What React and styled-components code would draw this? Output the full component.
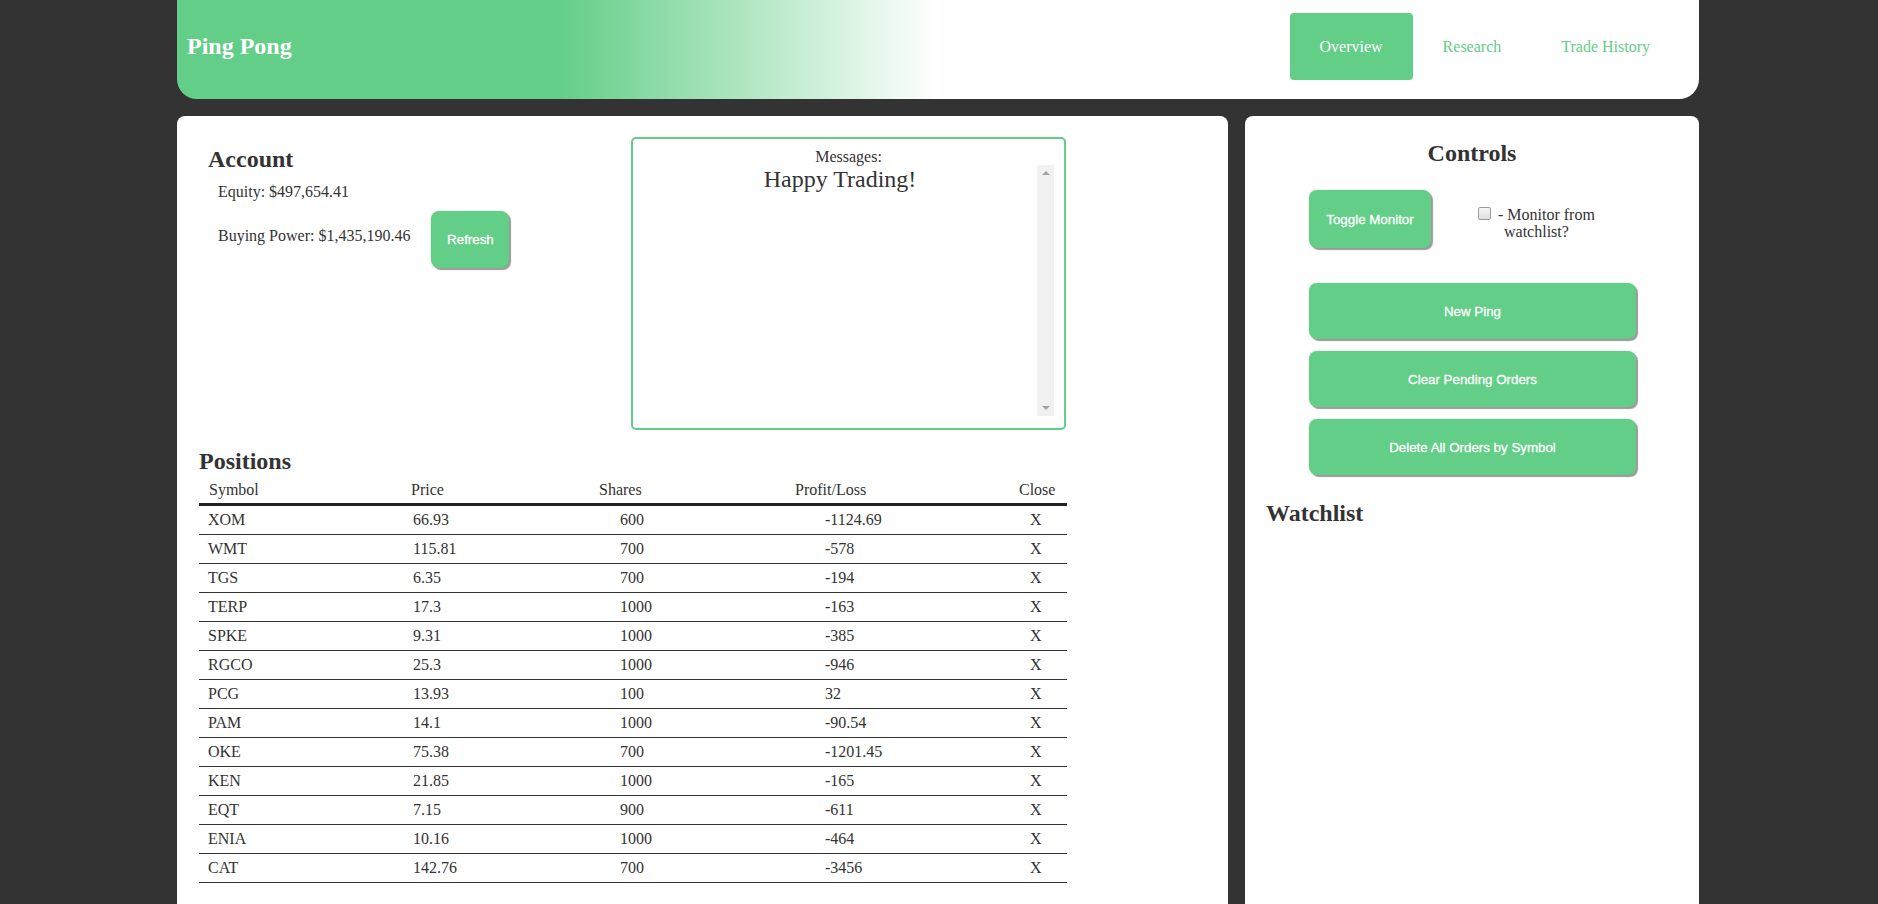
import React, { useState } from "react";
import styled, { createGlobalStyle } from "styled-components";

const green = "#63ce87";

const GlobalStyle = createGlobalStyle`
  body {
    margin: 0;
    background: #333333;
    font-family: "Liberation Serif", "Times New Roman", serif;
    color: #333;
  }
`;

const positions = [
  ["XOM", "66.93", "600", "-1124.69"],
  ["WMT", "115.81", "700", "-578"],
  ["TGS", "6.35", "700", "-194"],
  ["TERP", "17.3", "1000", "-163"],
  ["SPKE", "9.31", "1000", "-385"],
  ["RGCO", "25.3", "1000", "-946"],
  ["PCG", "13.93", "100", "32"],
  ["PAM", "14.1", "1000", "-90.54"],
  ["OKE", "75.38", "700", "-1201.45"],
  ["KEN", "21.85", "1000", "-165"],
  ["EQT", "7.15", "900", "-611"],
  ["ENIA", "10.16", "1000", "-464"],
  ["CAT", "142.76", "700", "-3456"],
];

// column widths and text offsets, header vs body
const columns = [
  { label: "Symbol", width: 212, th: 10, td: 9 },
  { label: "Price", width: 188, th: 0, td: 2 },
  { label: "Shares", width: 196, th: 0, td: 21 },
  { label: "Profit/Loss", width: 224, th: 0, td: 30 },
  { label: "Close", width: 48, th: 0, td: 11 },
];

const App = () => {
  const [tab, setTab] = useState("Overview");
  const [monitor, setMonitor] = useState(false);

  return (
    <>
      <GlobalStyle />
      <Page>
        <Header>
          <Brand>Ping Pong</Brand>
          <Nav>
            {["Overview", "Research", "Trade History"].map((t) => (
              <NavItem key={t} active={t === tab} onClick={() => setTab(t)}>
                {t}
              </NavItem>
            ))}
          </Nav>
        </Header>

        <Main>
          <LeftPanel>
            <TopRow>
              <AccountCol>
                <Title>Account</Title>
                <Line>Equity: $497,654.41</Line>
                <BuyRow>
                  <BuyText>Buying Power: $1,435,190.46</BuyText>
                  <GreenButton w="78px" h="57px">Refresh</GreenButton>
                </BuyRow>
              </AccountCol>

              <MessagesBox>
                <MessagesLabel>Messages:</MessagesLabel>
                <MessagesBody>
                  <MessagesText>Happy Trading!</MessagesText>
                  <ScrollRail>
                    <Arrow dir="up" />
                    <Arrow dir="down" />
                  </ScrollRail>
                </MessagesBody>
              </MessagesBox>
            </TopRow>

            <PositionsTitle>Positions</PositionsTitle>
            <Table>
              <colgroup>
                {columns.map((c) => (
                  <col key={c.label} style={{ width: c.width }} />
                ))}
              </colgroup>
              <thead>
                <tr>
                  {columns.map((c) => (
                    <Th key={c.label} pad={c.th}>
                      {c.label}
                    </Th>
                  ))}
                </tr>
              </thead>
              <tbody>
                {positions.map((row) => (
                  <tr key={row[0]}>
                    {[...row, "X"].map((v, i) => (
                      <Td key={i} pad={columns[i].td}>
                        {v}
                      </Td>
                    ))}
                  </tr>
                ))}
              </tbody>
            </Table>
          </LeftPanel>

          <RightPanel>
            <ControlsTitle>Controls</ControlsTitle>
            <ToggleRow>
              <GreenButton w="122px" h="58px">Toggle Monitor</GreenButton>
              <CheckLabel>
                <Check
                  type="checkbox"
                  checked={monitor}
                  onChange={() => setMonitor(!monitor)}
                />
                <CheckText>- Monitor from watchlist?</CheckText>
              </CheckLabel>
            </ToggleRow>
            <ActionList>
              <GreenButton w="327px" h="56px">New Ping</GreenButton>
              <GreenButton w="327px" h="56px">Clear Pending Orders</GreenButton>
              <GreenButton w="327px" h="56px">Delete All Orders by Symbol</GreenButton>
            </ActionList>
            <WatchTitle>Watchlist</WatchTitle>
          </RightPanel>
        </Main>
      </Page>
    </>
  );
};

const Page = styled.div`
  width: 1522px;
  margin: 0 auto;
  transform: translateX(-1px);
`;

const Header = styled.header`
  height: 99px;
  box-sizing: border-box;
  display: flex;
  align-items: center;
  justify-content: space-between;
  padding: 0 19px 7px 10px;
  border-radius: 0 0 20px 20px;
  background: linear-gradient(to right, ${green} 25%, #ffffff 50%);
`;

const Brand = styled.h1`
  margin: 0;
  font-size: 24px;
  line-height: 28px;
  font-weight: bold;
  color: #ffffff;
`;

const Nav = styled.nav`
  display: flex;
`;

const NavItem = styled.div`
  height: 67px;
  line-height: 67px;
  padding: 0 30px;
  font-size: 16px;
  border-radius: 4px;
  cursor: pointer;
  color: ${(props) => (props.active ? "#ffffff" : green)};
  background: ${(props) => (props.active ? green : "transparent")};
`;

const Main = styled.div`
  display: flex;
  gap: 17px;
  margin-top: 17px;
`;

const Panel = styled.section`
  background: #ffffff;
  border-radius: 8px;
  min-height: 830px;
  box-sizing: border-box;
`;

const LeftPanel = styled(Panel)`
  width: 1051px;
  padding: 21px 0 0 22px;
`;

const RightPanel = styled(Panel)`
  width: 454px;
  padding-top: 23px;
`;

const TopRow = styled.div`
  display: grid;
  grid-template-columns: 432px 435px;
  width: 868px;
`;

const Title = styled.h2`
  margin: 0;
  font-size: 24px;
  line-height: 28px;
  font-weight: bold;
`;

const AccountCol = styled.div`
  padding: 8px 0 0 9px;
`;

const Line = styled.div`
  margin: 10px 0 0 10px;
  font-size: 16px;
  line-height: 18px;
`;

const BuyRow = styled.div`
  display: flex;
  align-items: flex-start;
  margin: 10px 0 0 10px;
`;

const BuyText = styled.div`
  font-size: 16px;
  line-height: 18px;
  margin-top: 16px;
  margin-right: 21px;
`;

const GreenButton = styled.button`
  width: ${(props) => props.w};
  height: ${(props) => props.h};
  border: none;
  border-radius: 8px;
  background: ${green};
  color: #ffffff;
  font-family: "Liberation Sans", Arial, sans-serif;
  font-size: 13.33px;
  -webkit-text-stroke: 0.3px #ffffff;
  box-shadow: 2px 2px 1px #9a9a9a, -1px -1px 1px #f0f0f0;
  cursor: pointer;
  padding: 0;
`;

const MessagesBox = styled.div`
  width: 435px;
  height: 293px;
  box-sizing: border-box;
  border: 2px solid ${green};
  border-radius: 5px;
  padding: 10px;
`;

const MessagesLabel = styled.div`
  text-align: center;
  font-size: 16px;
  line-height: 16px;
`;

const MessagesBody = styled.div`
  display: flex;
  height: 251px;
`;

const MessagesText = styled.div`
  flex: 1;
  text-align: center;
  font-size: 24px;
  line-height: 28px;
`;

const ScrollRail = styled.div`
  width: 17px;
  background: #f1f1f1;
  display: flex;
  flex-direction: column;
  justify-content: space-between;
  align-items: center;
  padding: 6px 0;
  box-sizing: border-box;
`;

const Arrow = styled.span`
  width: 0;
  height: 0;
  border-left: 4px solid transparent;
  border-right: 4px solid transparent;
  ${(props) =>
    props.dir === "up"
      ? "border-bottom: 4px solid #a3a3a3;"
      : "border-top: 4px solid #a3a3a3;"}
`;

const PositionsTitle = styled(Title)`
  margin-top: 17px;
`;

const Table = styled.table`
  width: 868px;
  margin-top: 3px;
  border-collapse: collapse;
  table-layout: fixed;
  font-size: 16px;
`;

const Th = styled.th`
  text-align: left;
  font-weight: normal;
  line-height: 18px;
  padding: 3px 0 4px ${(props) => props.pad}px;
  border-bottom: 3px solid #222;
`;

const Td = styled.td`
  line-height: 18px;
  padding: 5px 0 5px ${(props) => props.pad}px;
  border-bottom: 1px solid #333;
`;

const ControlsTitle = styled(Title)`
  text-align: center;
`;

const ToggleRow = styled.div`
  display: flex;
  align-items: flex-start;
  margin: 23px 0 0 64px;
`;

const CheckLabel = styled.label`
  display: flex;
  align-items: flex-start;
  margin: 16px 0 0 47px;
  font-size: 16px;
  line-height: 17px;
`;

const Check = styled.input`
  appearance: none;
  width: 13px;
  height: 13px;
  margin: 1px 0 0;
  border: 1px solid #9c9c9c;
  border-radius: 2px;
  background: linear-gradient(#f6f6f6, #dedede);
  box-sizing: border-box;
  &:checked {
    background: ${green};
  }
`;

const CheckText = styled.span`
  width: 108px;
  margin-left: 7px;
  padding-left: 6px;
  text-indent: -6px;
`;

const ActionList = styled.div`
  display: flex;
  flex-direction: column;
  gap: 12px;
  margin: 35px 0 0 64px;
`;

const WatchTitle = styled(Title)`
  margin: 24px 0 0 21px;
`;

export default App;
